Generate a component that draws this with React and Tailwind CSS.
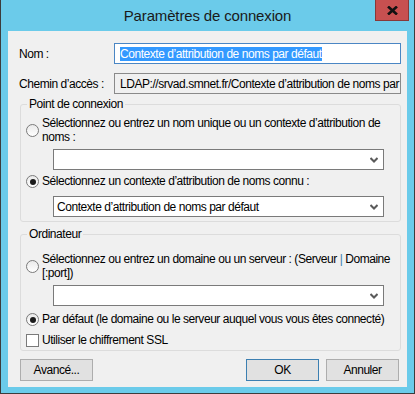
import React from "react";

const Radio = ({ checked }) => (
  <span className="w-[13px] h-[13px] shrink-0 rounded-full border border-[#7a7a7a] bg-gradient-to-b from-[#eaeaea] to-white flex items-center justify-center">
    {checked && <span className="w-[6px] h-[6px] rounded-full bg-[#1b1b1b]" />}
  </span>
);

const Combo = ({ value }) => (
  <div className="ml-[32px] mr-[16px] h-[21px] bg-white border border-[#7a7a7a] flex items-center pl-[3px] pr-[5px]">
    <span className="flex-1 truncate">{value}</span>
    <svg width="8" height="6" viewBox="0 0 8 6" className="shrink-0">
      <path d="M0.5 1 L4 4.5 L7.5 1" fill="none" stroke="#5a5a5a" strokeWidth="2" />
    </svg>
  </div>
);

const App = () => {
  return (
    <div
      className="w-[415px] h-[394px] bg-[#6bcbea] border-x border-b border-[#3c3c3c] flex flex-col text-black text-[12px] tracking-[-0.45px]"
      style={{ fontFamily: '"Liberation Sans", Arial, sans-serif' }}
    >
      {/* title bar */}
      <div className="relative h-[31px] shrink-0 flex items-center justify-center">
        <span className="text-[15px] text-[#1a1a1a] leading-none tracking-[-0.15px]">Paramètres de connexion</span>
        <div className="absolute top-0 right-[5px] w-[34px] h-[21px] bg-[#c75050] border-x border-b border-[#883838] flex items-center justify-center">
          <svg width="11" height="9" viewBox="0 0 11 9">
            <path d="M1 0.5 L10 8.5 M10 0.5 L1 8.5" stroke="#111" strokeWidth="2.6" />
          </svg>
        </div>
      </div>

      {/* client area */}
      <div className="mx-[7px] h-[356px] shrink-0 bg-[#f0f0f0] flex flex-col pl-[12px] pr-[6px] pt-[12px]">
        <div className="flex items-center h-[21px]">
          <span className="w-[95px] -ml-[1px]">Nom :</span>
          <div className="flex-1 h-full bg-white border border-[#4a86c4] flex items-center pl-[5px]">
            <span className="bg-[#3399ff] text-white leading-[14px]">Contexte d’attribution de noms par défaut</span>
          </div>
        </div>
        <div className="flex items-center h-[21px] mt-[9px]">
          <span className="w-[95px] -ml-[1px]">Chemin d’accès :</span>
          <div className="flex-1 min-w-0 h-full border border-[#8a8a8a] flex items-center pl-[5px] overflow-hidden whitespace-nowrap">
            LDAP://srvad.smnet.fr/Contexte d’attribution de noms par défaut
          </div>
        </div>

        <fieldset className="min-w-0 mt-[3px] border border-[#dcdcdc] rounded-[3px] pb-[4px]">
          <legend className="ml-[6px] px-[2px] leading-[15px]">Point de connexion</legend>
          <div className="flex items-center ml-[5px] mt-[4px]">
            <Radio />
            <span className="ml-[3px] leading-[14px] whitespace-nowrap">
              Sélectionnez ou entrez un nom unique ou un contexte d’attribution de
              <br />
              noms :
            </span>
          </div>
          <div className="mt-[5px]">
            <Combo value="" />
          </div>
          <div className="flex items-center ml-[5px] mt-[5px] h-[13px]">
            <Radio checked />
            <span className="ml-[3px] leading-[13px] whitespace-nowrap">Sélectionnez un contexte d’attribution de noms connu :</span>
          </div>
          <div className="mt-[8px]">
            <Combo value="Contexte d’attribution de noms par défaut" />
          </div>
        </fieldset>

        <fieldset className="min-w-0 mt-[5px] border border-[#dcdcdc] rounded-[3px] pb-[3px]">
          <legend className="ml-[6px] px-[2px] leading-[15px]">Ordinateur</legend>
          <div className="flex items-center ml-[5px] mt-[10px]">
            <Radio />
            <span className="ml-[3px] leading-[14px] whitespace-nowrap">
              Sélectionnez ou entrez un domaine ou un serveur : (Serveur <span className="text-[#3c7fb1]">|</span> Domaine
              <br />
              [:port])
            </span>
          </div>
          <div className="mt-[5px]">
            <Combo value="" />
          </div>
          <div className="flex items-center ml-[5px] mt-[7px] h-[13px]">
            <Radio checked />
            <span className="ml-[3px] leading-[13px] whitespace-nowrap">Par défaut (le domaine ou le serveur auquel vous vous êtes connecté)</span>
          </div>
          <div className="flex items-center ml-[5px] mt-[8px] h-[13px]">
            <span className="w-[13px] h-[13px] shrink-0 border border-[#7a7a7a] bg-white" />
            <span className="ml-[3px] leading-[13px]">Utiliser le chiffrement SSL</span>
          </div>
        </fieldset>

        <div className="flex items-center mt-[8px] pr-[2px]">
          <button className="w-[73px] h-[22px] bg-[#e1e1e1] border border-[#adadad]">Avancé...</button>
          <div className="flex-1" />
          <button className="w-[73px] h-[22px] bg-[#e1e1e1] border border-[#3c7fb1]">OK</button>
          <button className="w-[73px] h-[22px] ml-[7px] bg-[#e1e1e1] border border-[#adadad]">Annuler</button>
        </div>
      </div>
    </div>
  );
};

export default App;
